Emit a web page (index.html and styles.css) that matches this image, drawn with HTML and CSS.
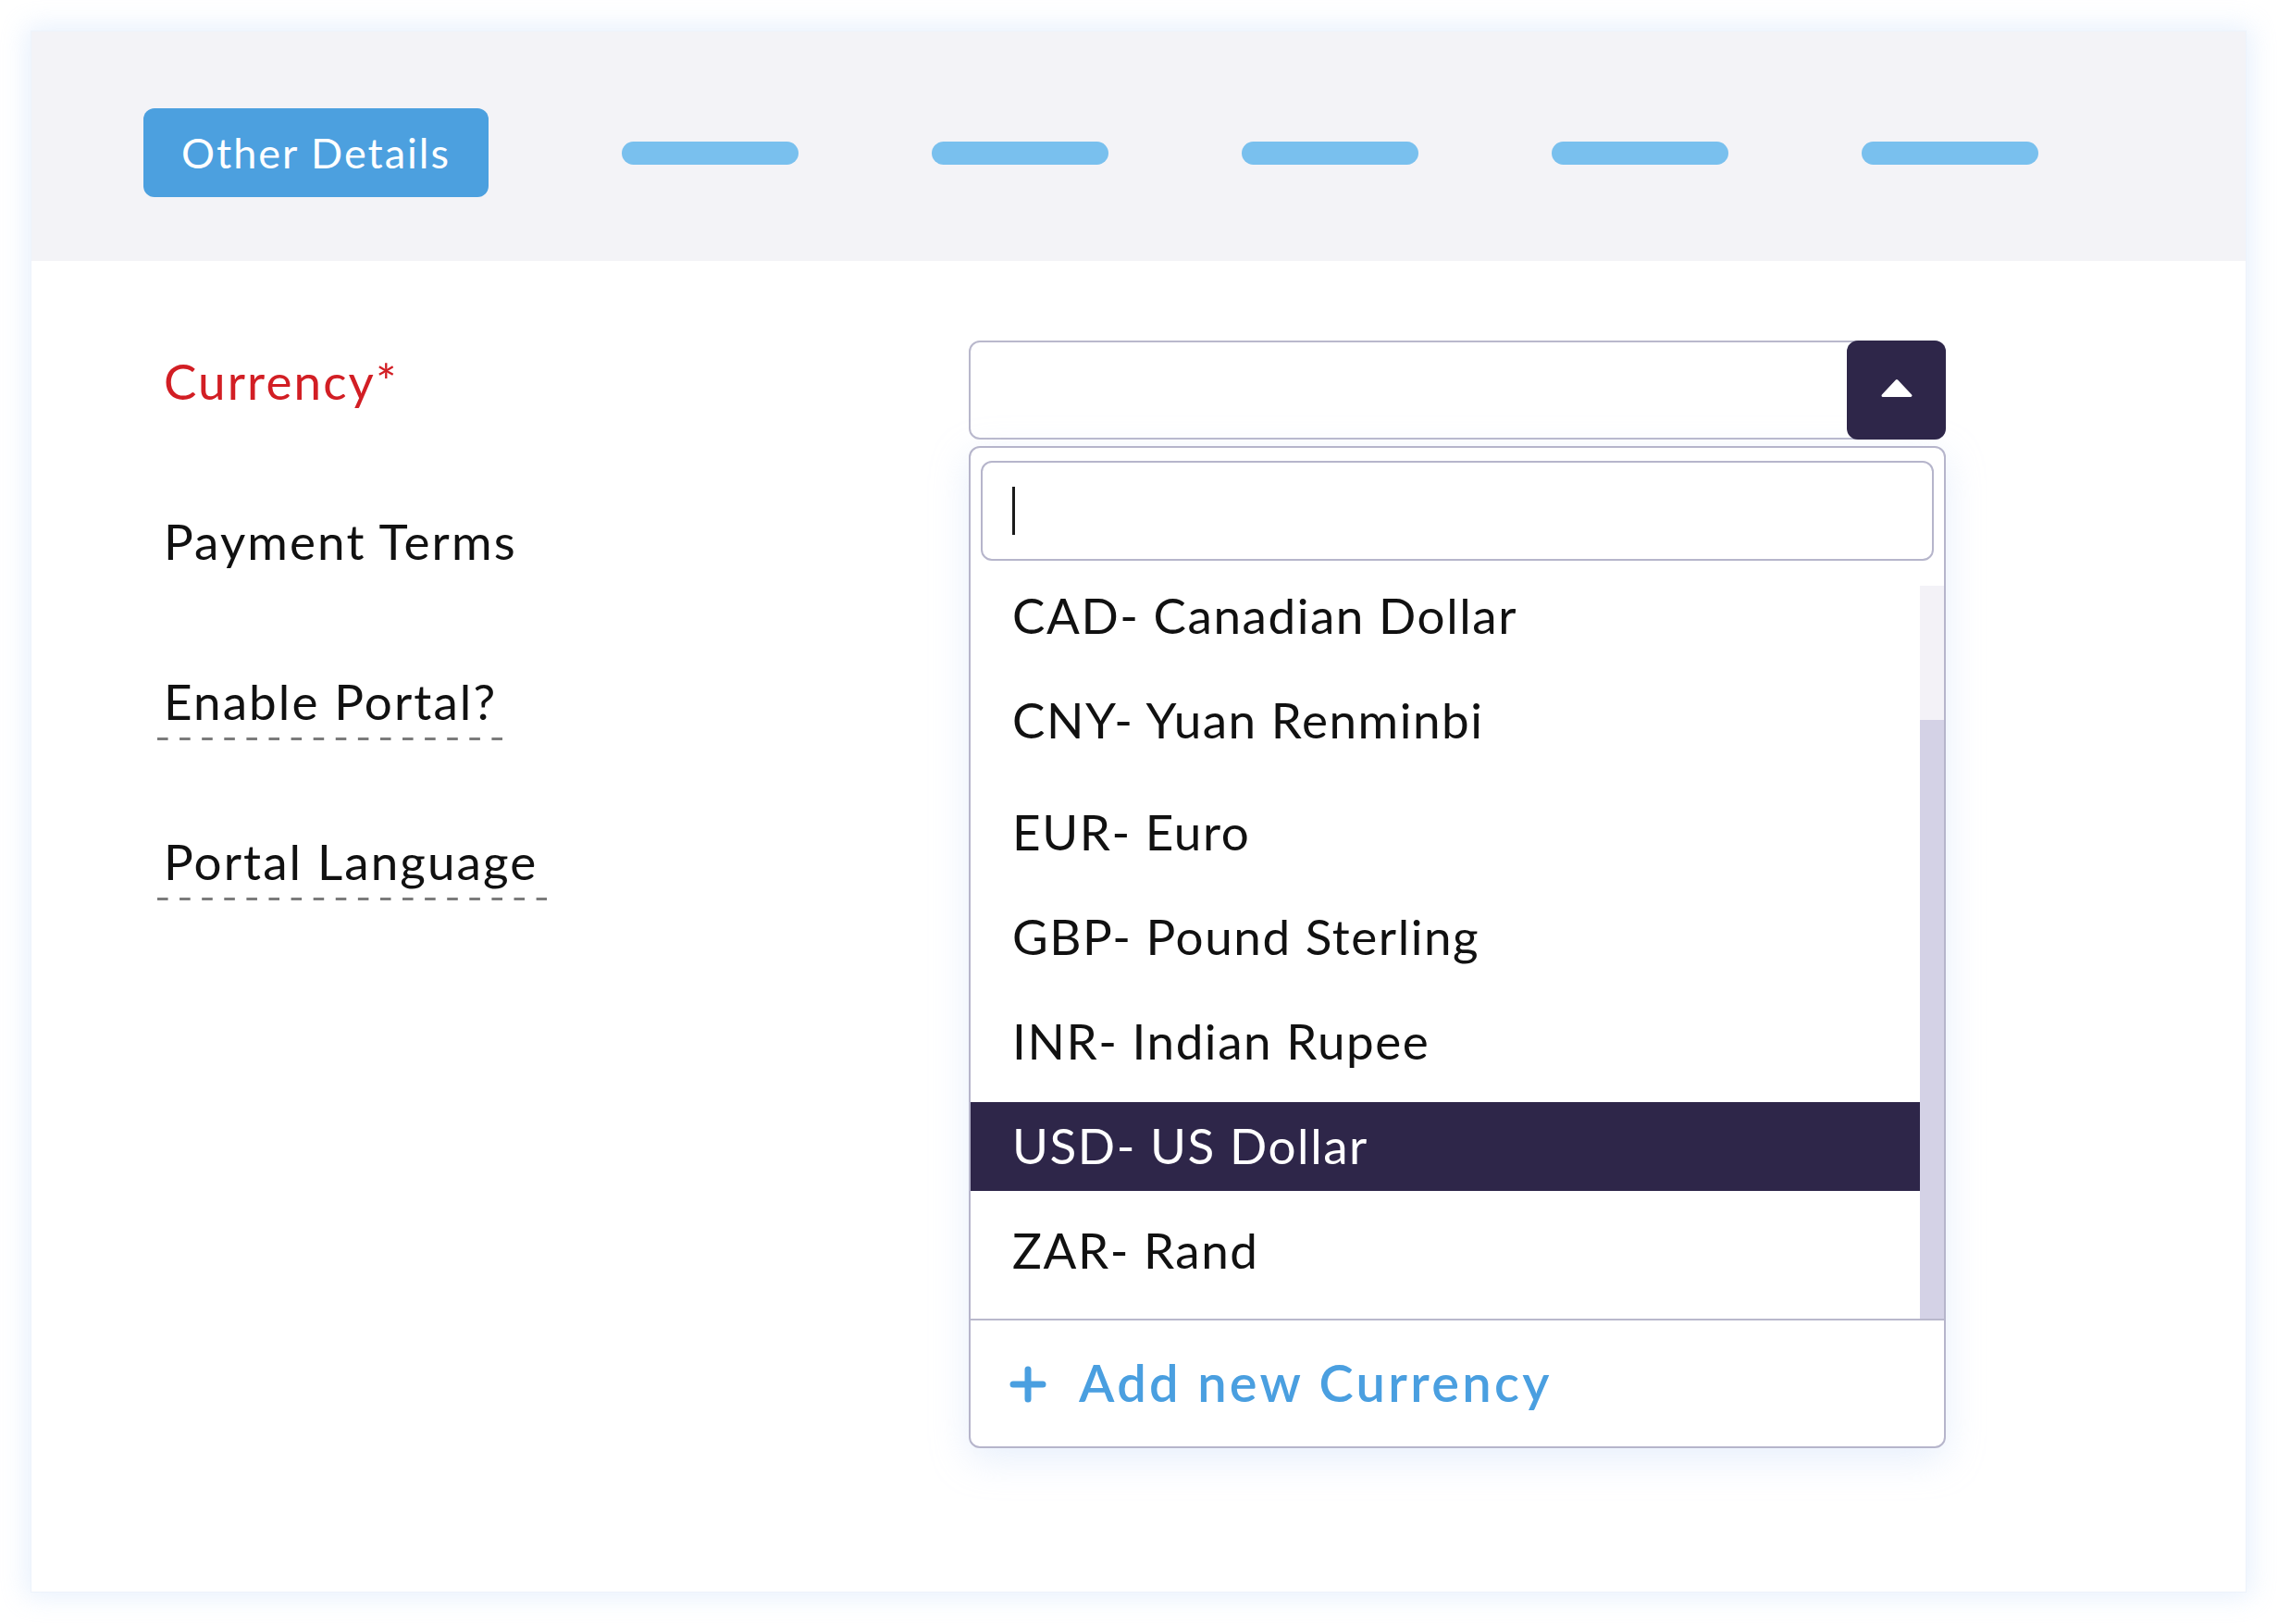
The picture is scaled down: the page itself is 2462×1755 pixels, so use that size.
FILE: index.html
```html
<!DOCTYPE html>
<html lang="en">
<head>
<meta charset="utf-8">
<title>Other Details – Currency</title>
<link rel="stylesheet" href="styles.css">
</head>
<body>
<div class="card">
  <div class="steps">
    <div class="step-active">Other Details</div>
    <div class="step-bar"></div>
    <div class="step-bar"></div>
    <div class="step-bar"></div>
    <div class="step-bar"></div>
    <div class="step-bar"></div>
  </div>
  <div class="form">
    <div class="labels">
      <div class="label-row"><span class="label label-required">Currency*</span></div>
      <div class="label-row"><span class="label">Payment Terms</span></div>
      <div class="label-row"><span class="label label-dashed">Enable Portal?</span></div>
      <div class="label-row"><span class="label label-dashed">Portal Language</span></div>
    </div>
    <div class="control">
      <div class="select">
        <div class="select-toggle">
          <svg class="caret-up" width="38" height="22" viewBox="0 0 38 22"><path d="M4 19.5 L19 3.5 L34 19.5 Z" fill="#fff" stroke="#fff" stroke-width="3" stroke-linejoin="round"/></svg>
        </div>
      </div>
      <div class="dropdown">
        <div class="search"><div class="text-caret"></div></div>
        <div class="list-area">
          <div class="options">
            <div class="option">CAD- Canadian Dollar</div>
            <div class="option">CNY- Yuan Renminbi</div>
            <div class="option option-shift">EUR- Euro</div>
            <div class="option">GBP- Pound Sterling</div>
            <div class="option">INR- Indian Rupee</div>
            <div class="option option-selected">USD- US Dollar</div>
            <div class="option">ZAR- Rand</div>
          </div>
          <div class="scroll-track"><div class="scroll-thumb"></div></div>
        </div>
        <div class="dropdown-footer">
          <svg class="plus" width="40" height="40" viewBox="0 0 40 40"><path d="M20 4 V36 M4 20 H36" stroke="#4a9fe0" stroke-width="7" stroke-linecap="round" fill="none"/></svg>
          <span class="add-text">Add new Currency</span>
        </div>
      </div>
    </div>
  </div>
</div>
</body>
</html>
```

FILE: styles.css
```css
html, body {
  margin: 0;
  background: #ffffff;
}
body {
  padding: 34px 35px 35px 34px;
  font-family: "Lato", "Liberation Sans", sans-serif;
  color: #111111;
}
.card {
  width: 2393px;
  height: 1686px;
  background: #ffffff;
  box-shadow: 0 0 0 1px #edf3fb, 0 0 26px 6px rgba(205, 225, 250, 0.45);
  overflow: hidden;
}

/* step header */
.steps {
  height: 248px;
  box-sizing: border-box;
  background: #f3f3f7;
  padding: 83px 0 0 121px;
  display: flex;
  align-items: flex-start;
  gap: 144px;
}
.step-active {
  width: 373px;
  height: 96px;
  border-radius: 12px;
  background: #4ca0df;
  color: #ffffff;
  font-size: 45px;
  letter-spacing: 2px;
  display: flex;
  align-items: center;
  justify-content: center;
}
.step-bar {
  width: 191px;
  height: 25px;
  margin-top: 36px;
  border-radius: 13px;
  background: #79c0ee;
}

/* form */
.form {
  display: flex;
  padding-left: 143px;
}
.labels {
  width: 870px;
  padding-top: 97px;
  display: flex;
  flex-direction: column;
}
.label-row {
  height: 173px;
}
.label {
  display: inline-block;
  font-size: 53px;
  line-height: 65px;
  letter-spacing: 2.1px;
  color: #111111;
}
.label-required {
  color: #d21e24;
}
.label-dashed {
  margin-left: -7px;
  padding: 0 10px 10px 7px;
  background-image: linear-gradient(to right, #7b7b7b 0 11.6px, transparent 11.6px 24.1px);
  background-size: 24.1px 3px;
  background-repeat: repeat-x;
  background-position: left bottom;
}

.control {
  width: 1056px;
  padding-top: 86px;
}
.select {
  height: 107px;
  box-sizing: border-box;
  border: 2px solid #b9b8cc;
  border-radius: 12px;
  display: flex;
  justify-content: flex-end;
}
.select-toggle {
  width: 107px;
  height: 107px;
  margin: -2px -2px -2px 0;
  border-radius: 12px;
  background: #2e2649;
  display: flex;
  align-items: center;
  justify-content: center;
}
.caret-up {
  display: block;
  margin-top: -6px;
}

.dropdown {
  margin-top: 7px;
  border: 2px solid #b6b5cb;
  border-radius: 12px;
  overflow: hidden;
  background: #ffffff;
  box-shadow: 0 12px 40px rgba(185, 210, 245, 0.35);
}
.search {
  margin: 14px 11px 0 11px;
  height: 108px;
  box-sizing: border-box;
  border: 2px solid #b6b5cb;
  border-radius: 12px;
  padding: 26px 0 0 32px;
}
.text-caret {
  width: 3px;
  height: 52px;
  background: #1a1a1a;
}
.list-area {
  margin-top: 12px;
  height: 807px;
  display: flex;
}
.options {
  flex: 1;
  display: flex;
  flex-direction: column;
  gap: 17px;
}
.option {
  height: 96px;
  box-sizing: border-box;
  padding: 3px 0 5px 45px;
  font-size: 53px;
  line-height: 88px;
  letter-spacing: 1.55px;
  color: #111111;
  white-space: nowrap;
}
.option-shift {
  margin-top: 8px;
}
.option-selected {
  background: #2e2649;
  color: #ffffff;
}
.scroll-track {
  width: 26px;
  margin-top: 15px;
  background: #f3f2f7;
  display: flex;
  flex-direction: column;
}
.scroll-thumb {
  flex: 1;
  margin-top: 145px;
  background: #d4d2e6;
}
.dropdown-footer {
  height: 138px;
  box-sizing: border-box;
  padding: 0 0 3px 42px;
  border-top: 2px solid #b9b8cc;
  display: flex;
  align-items: center;
  gap: 35px;
}
.plus {
  display: block;
  margin-top: 5px;
}
.add-text {
  font-size: 56px;
  font-weight: 600;
  letter-spacing: 3.3px;
  color: #4a9fe0;
}
```
